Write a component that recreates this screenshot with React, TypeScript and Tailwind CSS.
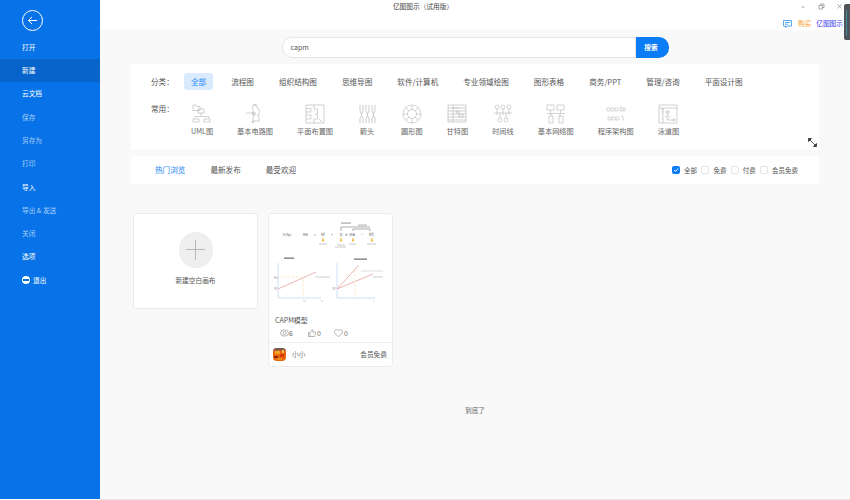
import React from "react";

const font = '"Noto Sans CJK SC", "Noto Sans", sans-serif';
const sideItems: [string, boolean][] = [
  ["打开", true], ["新建", true], ["云文档", true], ["保存", false], ["另存为", false], ["打印", false],
  ["导入", true], ["导出 & 发送", false], ["关闭", false], ["选项", true],
];
const cats = ["流程图", "组织结构图", "思维导图", "软件/计算机", "专业领域绘图", "图形表格", "商务/PPT", "管理/咨询", "平面设计图"];

const S = ({ children }: { children: React.ReactNode }) => (
  <svg width="20" height="20" viewBox="0 0 20 20" fill="none" stroke="#b4b4b4" strokeWidth="0.6">{children}</svg>
);

const IconUml = () => (
  <S>
    <path d="M1 1h3l1 1.500h3v4H1zM6 5h6v4H6zM9 9v3M3 12.500h14M3 12.500v2M17 12.500v2M1 15h6v3H1zM12 15h6v3h-6z" />
  </S>
);
const IconCircuit = () => (
  <S>
    <path d="M8 1h4v3l2 1v6h-1.500l1.500 2v4h-6v-4l1.500-2H8V5l-0.500-1zM1 9h7M8 8l3 1.500-3 1.500zM8 18h-1" />
    <circle cx="10" cy="1" r="0.800" /><circle cx="8" cy="18" r="0.800" />
  </S>
);
const IconPlan = () => (
  <S>
    <path d="M1 1h18v18H1zM1 4.500h5v3.500H1M1 11h5v4H1M9 1v4M9 15v4M9 5h3.500v4l-2 1 2 1v4H9M14 15l3 3" />
  </S>
);
const IconArrows = () => (
  <S>
    <path d="M3 1v6M6 1v6M3 7l1.500 3L6 7M4.500 10v2M3 19v-5l1.500-2L6 14v5M9 1v6M12 1v6M9 7l1.500 3L12 7M10.500 10v2M9 19v-5l1.500-2 1.500 2v5M15 1v6M18 1v6M15 7l1.500 3L18 7M16.500 10v2M15 19v-5l1.500-2 1.500 2v5" strokeWidth="0.7" />
  </S>
);
const IconRing = () => (
  <S>
    <circle cx="10" cy="10" r="9" /><circle cx="10" cy="10" r="4.500" />
    <path d="M10 1v4.500M10 14.500V19M1 10h4.500M14.500 10H19M3.600 3.600l3.200 3.200M13.200 13.200l3.200 3.200M16.400 3.600l-3.200 3.200M6.800 13.200l-3.200 3.200" />
  </S>
);
const IconGantt = () => (
  <S>
    <path d="M1 1h18v17H1zM1 4h18M1 7h18M1 10h18M1 13h18M1 16h18M6 1v17M6 4h6M9 7h3v2H9zM12 10h4v3h-4z" />
  </S>
);
const IconTimeline = () => (
  <S>
    <circle cx="4" cy="3" r="2" /><circle cx="10" cy="3" r="2" /><circle cx="16" cy="3" r="2" />
    <circle cx="7" cy="16" r="2" /><circle cx="13" cy="16" r="2" />
    <path d="M4 5v6M10 5v6M16 5v6M1 9h18M7 9v5M13 9v5" />
  </S>
);
const IconNetwork = () => (
  <S>
    <path d="M1 1h7v5H1zM11 1h7v5h-7zM4.500 6v3M14.500 6v3M1 9.500h18M5 10v2M14 10v2M3 12h4v7H3zM13 12h4v7h-4z" />
  </S>
);
const IconArch = () => (
  <S>
    <path d="M1 4h3v3H1zM5 4h3v3H5zM9 4h3v3H9zM14 3h2v4h-2zM17 4h2v3h-2zM2 13h3v3H2zM6 13h3v3H6zM10 13h3v3h-3zM15 12h2v4h2" strokeWidth="0.5" />
  </S>
);
const IconSwim = () => (
  <S>
    <path d="M1 1h18v18H1zM1 4h18M5 4v15M3 5.500h3M4 7v2M8 7h3v2H8zM9.500 9v2M9.500 11l2 1.500-2 1.500-2-1.500zM9.500 14v2h7M4 11h1M4 15h1" />
    <circle cx="16" cy="16" r="1" />
  </S>
);

const usual: [string, React.ReactNode][] = [
  ["UML图", <IconUml />], ["基本电路图", <IconCircuit />], ["平面布置图", <IconPlan />], ["箭头", <IconArrows />],
  ["圆形图", <IconRing />], ["甘特图", <IconGantt />], ["时间线", <IconTimeline />], ["基本网络图", <IconNetwork />],
  ["程序架构图", <IconArch />], ["泳道图", <IconSwim />],
];

const Thumb = () => (
  <svg width="124" height="94" viewBox="0 0 124 94" fill="none" fontFamily={font}>
    <text x="14" y="21.500" fontSize="3.400" fill="#666">E(Rp)</text>
    <text x="34" y="21.500" fontSize="3.800" fill="#555">Ra</text>
    <text x="45" y="21.500" fontSize="3.800" fill="#555">=</text>
    <text x="52" y="21.500" fontSize="3.800" fill="#555">Rf</text>
    <text x="62" y="21.500" fontSize="3.800" fill="#555">+</text>
    <text x="71" y="21.500" fontSize="3.800" fill="#555">β</text>
    <text x="75.500" y="21.500" fontSize="3.800" fill="#555">×</text>
    <text x="80" y="21.500" fontSize="3.800" fill="#555">(Ra</text>
    <text x="92" y="21.500" fontSize="3.800" fill="#555">−</text>
    <text x="100" y="21.500" fontSize="3.800" fill="#555">Rf)</text>
    <path d="M72 17v-4h29M84 17v-2h17v2" stroke="#777" strokeWidth="0.600" />
    <rect x="72" y="8.500" width="10" height="1.200" fill="#aaa" />
    <rect x="89" y="10.500" width="9" height="1.200" fill="#bbb" />
    <path d="M54 24v2.500M72 24v2.500M84 24v2.500M103 24v2.500" stroke="#f5b83d" strokeWidth="1.300" />
    <path d="M52.500 26h3l-1.500 2zM70.500 26h3l-1.500 2zM82.500 26h3l-1.500 2zM101.500 26h3l-1.500 2z" fill="#f5b83d" />
    <g fill="#cfcfcf">
      <rect x="50" y="29.500" width="8" height="1.100" />
      <rect x="68" y="30.500" width="8" height="1.100" />
      <rect x="66" y="32.500" width="11" height="1.100" />
      <rect x="80" y="29.500" width="7" height="1.100" />
      <rect x="98" y="29.500" width="9" height="1.100" />
    </g>
    <rect x="15" y="43.500" width="10" height="1.300" fill="#777" />
    <rect x="85" y="44.500" width="13" height="1.300" fill="#777" />
    <path d="M9 49v35h43" stroke="#cfe0f5" strokeWidth="1" />
    <path d="M68 49v35h38" stroke="#cfe0f5" strokeWidth="1" />
    <path d="M9 75l38-17" stroke="#e9a9a9" strokeWidth="0.900" />
    <path d="M9 63h25v21" stroke="#fae3bd" strokeWidth="0.800" strokeDasharray="3 1.500" />
    <path d="M68 75l22-24" stroke="#e9a9a9" strokeWidth="0.900" />
    <path d="M68 75l36-15" stroke="#e9a9a9" strokeWidth="0.900" />
    <path d="M86 56v28" stroke="#fae3bd" strokeWidth="0.800" strokeDasharray="3 1.500" />
    <path d="M92 57h22" stroke="#ddd" strokeWidth="1" />
    <path d="M104 63h10" stroke="#ccc" strokeWidth="1" />
    <path d="M46 63h15" stroke="#ccc" strokeWidth="1" />
    <path d="M34 87h3M52 87h2M104 87h1" stroke="#ccc" strokeWidth="1" />
    <text x="5" y="64.500" fontSize="3" fill="#999">Ra</text>
    <text x="5" y="76" fontSize="3" fill="#999">Rf</text>
    <text x="63.500" y="76" fontSize="3" fill="#999">Rf</text>
  </svg>
);

const Avatar = () => (
  <svg width="13" height="13" viewBox="0 0 13 13" className="rounded-[4px]">
    <rect width="13" height="13" fill="#e8650c" />
    <rect width="13" height="2.500" fill="#7a5a52" />
    <rect x="2" y="3" width="5" height="3" fill="#f5a623" />
    <rect x="7" y="6" width="4" height="3" fill="#d93a0a" />
    <rect x="1" y="8" width="4" height="2" fill="#8a2a08" />
    <rect x="4" y="10" width="5" height="2" fill="#f08a1c" />
    <rect x="9" y="2" width="2" height="3" fill="#f7c04a" />
  </svg>
);

const Check = ({ label, on }: { label: string; on?: boolean }) => (
  <div className="flex items-center gap-[4px]">
    {on ? (
      <span className="flex h-[8px] w-[8px] items-center justify-center rounded-[2px] bg-[#0a7cf5]">
        <svg width="6" height="6" viewBox="0 0 6 6" fill="none" stroke="#fff" strokeWidth="1"><path d="M1 3l1.500 1.500L5 1.500" /></svg>
      </span>
    ) : (
      <span className="h-[8px] w-[8px] rounded-[2px] border border-[#e4e4e4] bg-white" />
    )}
    <span className="text-[6.500px] text-[#555]">{label}</span>
  </div>
);

export default function App() {
  return (
    <div className="relative flex h-[500px] w-[850px] overflow-hidden bg-white leading-none" style={{ fontFamily: font }}>
      <aside className="flex h-[499px] w-[100px] shrink-0 flex-col bg-[#0873e8] pt-[10px]">
        <div className="ml-[22px] mb-[4.500px] flex h-[21px] w-[21px] items-center justify-center rounded-full border border-white">
          <svg width="11" height="11" viewBox="0 0 11 11" fill="none" stroke="#fff" strokeWidth="1"><path d="M10 5.500H1.500M5 2L1.500 5.500 5 9" /></svg>
        </div>
        {sideItems.map(([t, on]) => (
          <div key={t} className={`flex h-[23.300px] shrink-0 items-center pl-[22px] text-[6.700px] ${t === "新建" ? "bg-[#0764cb]" : ""} ${on ? "text-white" : "text-[#a5cdf7]"}`}>{t}</div>
        ))}
        <div className="flex h-[23.300px] shrink-0 items-center gap-[3px] pl-[22px] text-[6.700px] text-white">
          <span className="flex h-[8px] w-[8px] items-center justify-center rounded-full bg-white"><span className="h-[2px] w-[6px] bg-[#0873e8]" /></span>
          退出
        </div>
      </aside>

      <main className="flex h-[500px] w-[750px] flex-col">
        <header className="relative flex h-[30px] shrink-0 flex-col bg-white">
          <div className="flex h-[12px] items-center justify-center pr-[104px] pt-[1px] text-[6.700px] text-[#444]">
            亿图图示（试用版）
          </div>
          <div className="absolute right-[7px] top-[3px] flex items-center gap-[11px]">
            <svg width="8" height="7" viewBox="0 0 8 7" fill="none" stroke="#888" strokeWidth="0.700"><path d="M2.500 4h3" /></svg>
            <svg width="7" height="7" viewBox="0 0 7 7" fill="none" stroke="#888" strokeWidth="0.700"><path d="M1 2.500h3.500V6H1zM2.500 2.500V1H6v3.500H4.500" /></svg>
            <svg width="7" height="7" viewBox="0 0 7 7" fill="none" stroke="#888" strokeWidth="0.700"><path d="M1.500 1.500l4 4M5.500 1.500l-4 4" /></svg>
          </div>
          <div className="flex flex-1 items-end justify-end gap-[4px] pb-[3px] pr-[7px] text-[6.700px]">
            <svg width="9" height="8" viewBox="0 0 9 8" fill="none" stroke="#4a9df0" strokeWidth="0.900" className="mb-[-0.500px] mr-[2px]"><path d="M0.500 0.500h8v5.500H4L2.500 7.500V6h-2zM2 2.500h5M2 4.200h3" /></svg>
            <span className="text-[#f59a23]">购买</span>
            <span className="ml-[1px] text-[#3a3af0]">亿图图示</span>
          </div>
        </header>

        <div className="flex flex-1 flex-col items-start border-b border-[#e6e6e6] bg-[#f9f9f9] px-[31px] pt-[7px]">
          <div className="flex h-[21px] w-[688px] justify-center">
            <div className="flex h-[21px] w-[354px] items-center rounded-l-[10px] border border-[#e6e6e6] bg-white pl-[8px] text-[7px] text-[#555]">capm</div>
            <div className="flex h-[21px] w-[33px] items-center justify-center rounded-r-[10px] bg-[#0a7cf5] pr-[2px] text-[6.700px] font-bold text-white">搜索</div>
          </div>

          <section className="relative mt-[6px] h-[86px] w-[688px] rounded-[3px] bg-white pt-[9px]">
            <div className="flex items-center pl-[20px] text-[7.600px] text-[#555]">
              <span className="w-[33px] shrink-0">分类：</span>
              <div className="flex items-center gap-[11px]">
                <span className="flex h-[17px] items-center rounded-[3px] bg-[#d9ebfd] px-[7px] text-[#1e88f5]">全部</span>
                {cats.map((c) => <span key={c} className="px-[7px]">{c}</span>)}
              </div>
            </div>
            <div className="mt-[14px] flex items-start pl-[20px]">
              <span className="w-[40px] shrink-0 pt-[1px] text-[7.600px] text-[#555]">常用：</span>
              <div className="flex gap-[24px]">
                {usual.map(([t, ic]) => (
                  <div key={t} className="flex flex-col items-center gap-[4px] text-[7.200px] whitespace-nowrap text-[#666]">
                    <div className="flex h-[20px] items-center justify-center">{ic}</div>
                    <span>{t}</span>
                  </div>
                ))}
              </div>
            </div>
            <svg width="9" height="9" viewBox="0 0 9 9" fill="none" stroke="#333" strokeWidth="0.800" className="absolute bottom-[3px] right-[2px]">
              <path d="M1 1l7 7" /><path d="M0.500 3.500V0.500h3zM8.500 5.500v3h-3z" fill="#333" />
            </svg>
          </section>

          <section className="mt-[6px] flex h-[28px] w-[688px] items-center justify-between rounded-[3px] bg-white pl-[24px] pr-[21px] text-[7.600px] text-[#555]">
            <div className="flex gap-[25px]">
              <span className="text-[#1e88f5]">热门浏览</span><span>最新发布</span><span>最受欢迎</span>
            </div>
            <div className="flex gap-[4.300px]">
              <Check label="全部" on /><Check label="免费" /><Check label="付费" /><Check label="会员免费" />
            </div>
          </section>

          <section className="mt-[29px] flex items-start gap-[10px] pl-[2px]">
            <div className="flex h-[96px] w-[125px] flex-col items-center rounded-[3px] border border-[#ececec] bg-white pt-[18px]">
              <div className="relative h-[36px] w-[34px] rounded-full bg-[#eeeeee]">
                <span className="absolute left-[7px] top-[17px] h-[1px] w-[19px] bg-[#b8b8b8]" />
                <span className="absolute left-[16px] top-[8px] h-[20px] w-[1px] bg-[#b8b8b8]" />
              </div>
              <span className="mt-[9px] text-[6.700px] text-[#555]">新建空白画布</span>
            </div>
            <div className="flex h-[154px] w-[125px] flex-col overflow-hidden rounded-[3px] border border-[#ececec] bg-white">
              <Thumb />
              <div className="pl-[6px] pt-[9px] text-[7px] text-[#555]">CAPM模型</div>
              <div className="flex items-center pl-[11px] pt-[5px] text-[7px] text-[#666]">
                <svg width="9" height="8" viewBox="0 0 9 8" fill="none" stroke="#888" strokeWidth="0.600"><ellipse cx="4.500" cy="4" rx="4" ry="3.200" /><circle cx="4.500" cy="4" r="1.600" /></svg>
                <span className="w-[19px]">6</span>
                <svg width="8" height="8" viewBox="0 0 8 8" fill="none" stroke="#888" strokeWidth="0.600"><path d="M0.500 3.500h1.500v4H0.500zM2 3.500L4 0.500c1 0 1 1 0.800 2.500h2.700l-0.700 4.500H2" /></svg>
                <span className="ml-[1px] w-[17px]">0</span>
                <svg width="9" height="8" viewBox="0 0 9 8" fill="none" stroke="#888" strokeWidth="0.600"><path d="M4.500 7.500C2 6 0.500 4.500 0.500 2.700 0.500 1.300 1.500 0.500 2.500 0.500c1 0 1.600 0.500 2 1 0.400-0.500 1-1 2-1 1 0 2 0.800 2 2.200 0 1.800-1.500 3.300-4 4.800z" /></svg>
                <span className="ml-[1px]">0</span>
              </div>
              <div className="mt-[5px] flex flex-1 items-center border-t border-[#eeeeee] pl-[4px] pr-[5px] text-[6.700px] text-[#555]">
                <Avatar />
                <span className="ml-[6px] text-[#777]">小小</span>
                <span className="ml-auto">会员免费</span>
              </div>
            </div>
          </section>

          <div className="mt-[40px] w-[688px] text-center text-[6.700px] text-[#666]">到底了</div>
        </div>
      </main>

      <div className="absolute right-0 top-[4px] h-[36px] w-[6px] rounded-l-[2px] bg-[#4c5459]">
        <span className="absolute left-[2px] top-[6px] block h-[26px] w-[1px] bg-[#3f8f9a]" />
      </div>
    </div>
  );
}
